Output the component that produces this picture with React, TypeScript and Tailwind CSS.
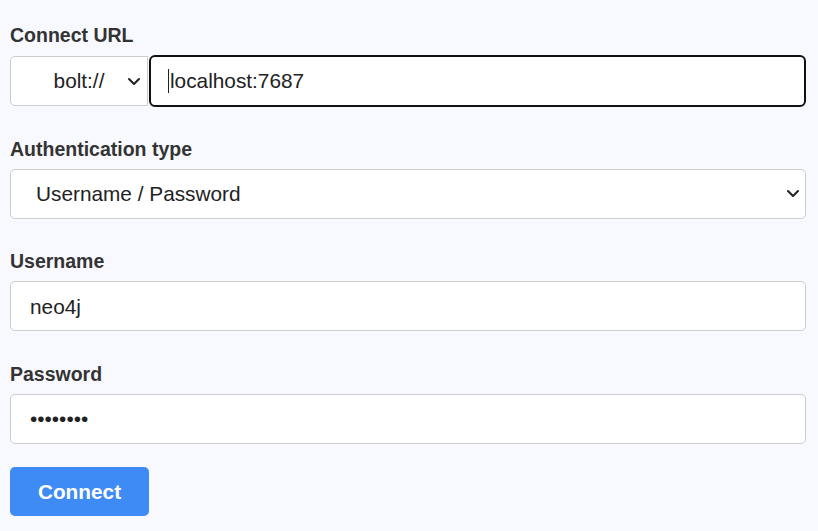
import React from "react";

const Chevron = () => (
  <svg width="14" height="9" viewBox="0 0 14 9" fill="none">
    <path d="M2 2l5 5 5-5" stroke="#222" strokeWidth="2" strokeLinecap="round" strokeLinejoin="round" />
  </svg>
);

const Label = ({ children }: { children: React.ReactNode }) => (
  <div className="text-[19.5px] leading-[24px] font-bold text-[#333] mb-[8px]">{children}</div>
);

const Field = ({ children }: { children: React.ReactNode }) => (
  <div className="h-[50px] w-full flex items-center bg-white border border-[#ccc] rounded-[5px] pl-[19px] pr-3 text-[20.8px] text-[#222]">
    {children}
  </div>
);

const App = () => {
  return (
    <div
      className="w-[818px] h-[531px] bg-[#f8f9fe] pl-[10px] pr-[12px] pt-[23px]"
      style={{ fontFamily: '"Liberation Sans", Arial, sans-serif' }}
    >
      <div className="mb-[29.67px]">
        <Label>Connect URL</Label>
        <div className="flex items-center">
          <div className="h-[50px] w-[138px] flex items-center bg-white border border-[#ccc] rounded-l-[5px] text-[20.8px] text-[#222]">
            <span className="flex-1 text-center pl-[20px]">bolt://</span>
            <span className="pr-[6px] flex items-center">
              <Chevron />
            </span>
          </div>
          <div className="ml-[1px] flex-1 h-[52px] flex items-center bg-white border-2 border-[#111] rounded-[6px] pl-[17px] text-[20.8px] text-[#222]">
            <span className="w-[1px] h-[24px] bg-[#222] mr-[1px]" />
            localhost:7687
          </div>
        </div>
      </div>

      <div className="mb-[30.67px]">
        <Label>Authentication type</Label>
        <div className="h-[50px] w-full flex items-center justify-between bg-white border border-[#ccc] rounded-[5px] pl-[25px] pr-[5px] text-[20.8px] text-[#222]">
          <span>Username / Password</span>
          <Chevron />
        </div>
      </div>

      <div className="mb-[30.67px]">
        <Label>Username</Label>
        <Field>neo4j</Field>
      </div>

      <div className="mb-[23px]">
        <Label>Password</Label>
        <Field>
          <span>••••••••</span>
        </Field>
      </div>

      <button className="w-[139px] h-[49px] bg-[#3e8bf6] rounded-[5px] text-white font-bold text-[20.8px]">
        Connect
      </button>
    </div>
  );
};

export default App;
